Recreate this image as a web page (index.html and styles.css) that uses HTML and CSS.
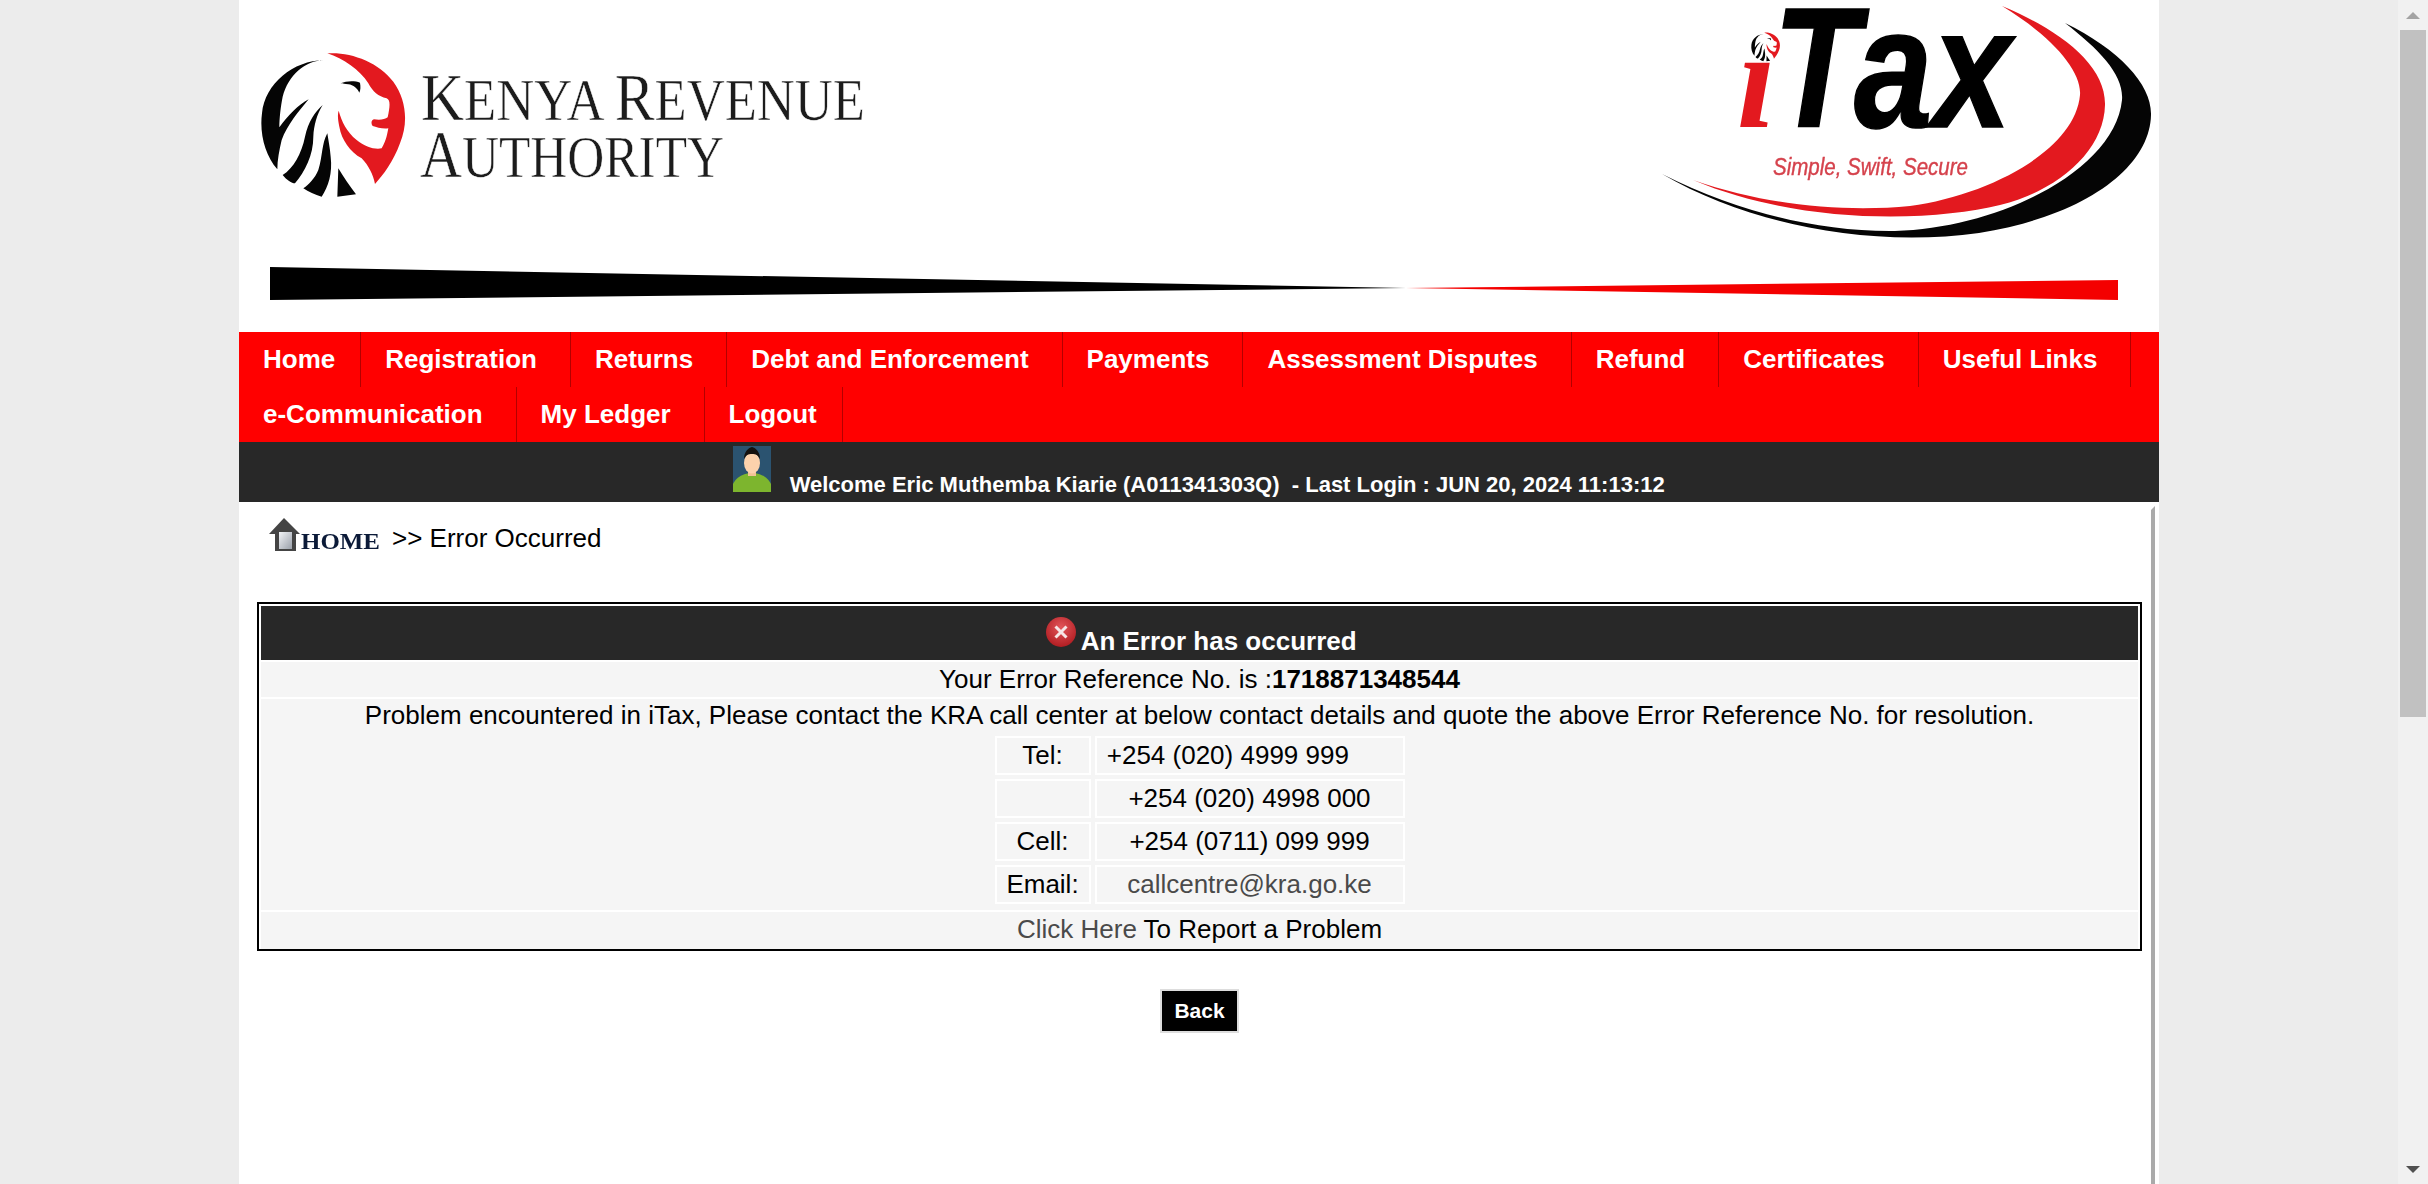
FILE: index.html
```html
<!DOCTYPE html>
<html lang="en">
<head>
    <meta charset="UTF-8">
    <title>iTax - Error Occurred</title>
    <link rel="stylesheet" href="styles.css">
</head>
<body>
    <div class="viewport">
        <div class="wrapper">
            <header class="banner">
                <div class="logos">
                    <svg class="logo-kra" viewBox="239 0 640 210">
                        <defs>
                            <g id="lion">
                                <path fill="#050505" d="M222 60C165 62 115 105 98 170C92 200 88 235 88 262C115 225 145 195 176 178C145 215 112 255 95 300C88 330 82 360 82 388C45 345 28 280 36 220C45 130 130 62 222 60Z"/>
                                <path fill="#050505" d="M218 195C195 215 175 245 165 290C155 340 130 385 98 405C110 420 125 430 135 430C165 395 190 345 190 290C192 255 200 225 218 195Z"/>
                                <path fill="#050505" d="M232 280C215 310 218 350 205 390C195 415 175 435 160 445C175 455 195 465 215 470C235 440 248 400 242 350C240 325 235 300 232 280Z"/>
                                <path fill="#050505" d="M265 385L262 470L318 463C300 440 280 410 265 385Z"/>
                                <path fill="#050505" d="M272 130C290 122 315 122 330 128C332 140 332 150 328 158C322 145 310 135 295 133C285 132 278 132 272 130Z"/>
                                <path fill="#e3191f" d="M232 40C300 35 385 65 430 125C470 180 475 250 450 310C430 365 400 405 375 432C370 405 355 375 335 355C300 335 275 300 268 260C264 240 262 225 266 212C275 245 290 275 320 300C345 320 375 330 395 325C410 300 412 280 415 265C400 268 380 262 368 258C362 250 364 240 372 238C385 240 405 240 413 232C420 200 422 180 410 175C385 170 368 155 355 130C330 90 280 55 232 40Z"/>
                            </g>
                        </defs>
                        <use href="#lion" transform="translate(250 40) scale(.3333)"/>
                        <text class="kra-name" x="421" y="120" textLength="444" lengthAdjust="spacingAndGlyphs">K<tspan class="kra-small">ENYA </tspan>R<tspan class="kra-small">EVENUE</tspan></text>
                        <text class="kra-name" x="420" y="177" textLength="304" lengthAdjust="spacingAndGlyphs">A<tspan class="kra-small">UTHORITY</tspan></text>
                    </svg>
                    <svg class="logo-itax" viewBox="1650 0 509 250">
                        <path fill="#050505" d="M2065 23C2120 50 2152 85 2151 115C2150 165 2090 215 1979 233C1870 248 1750 225 1662 174C1740 213 1820 232 1895 231C2000 228 2115 170 2122 100C2124 75 2100 50 2065 23Z"/>
                        <path fill="#e3191f" d="M2002 6C2060 30 2106 65 2105 105C2104 150 2060 190 2000 205C1930 222 1800 225 1693 180C1770 207 1850 212 1910 206C1990 195 2075 150 2080 95C2082 70 2050 35 2002 6Z"/>
                        <use href="#lion" transform="translate(1749 30) scale(.0665)"/>
                        <text class="itax-i" x="1737" y="127">&#305;</text>
                        <text class="itax-word" x="1773" y="127" textLength="238" lengthAdjust="spacingAndGlyphs">Tax</text>
                        <text class="itax-motto" x="1773" y="175" textLength="195" lengthAdjust="spacingAndGlyphs">Simple, Swift, Secure</text>
                    </svg>
                </div>
                <svg class="swoosh" viewBox="239 260 1920 50">
                    <polygon fill="#000" points="270,267 1406,288 270,300"/>
                    <polygon fill="#f40000" points="1406,288 2118,280 2118,300"/>
                </svg>
            </header>

            <nav class="menu">
                <a class="menu-item" href="#">Home</a>
                <a class="menu-item has-sub" href="#">Registration</a>
                <a class="menu-item has-sub" href="#">Returns</a>
                <a class="menu-item has-sub" href="#">Debt and Enforcement</a>
                <a class="menu-item has-sub" href="#">Payments</a>
                <a class="menu-item has-sub" href="#">Assessment Disputes</a>
                <a class="menu-item has-sub" href="#">Refund</a>
                <a class="menu-item has-sub" href="#">Certificates</a>
                <a class="menu-item has-sub" href="#">Useful Links</a>
                <a class="menu-item has-sub" href="#">e-Communication</a>
                <a class="menu-item has-sub" href="#">My Ledger</a>
                <a class="menu-item" href="#">Logout</a>
            </nav>

            <div class="welcome">
                <svg class="avatar" viewBox="0 0 38 46">
                    <rect width="38" height="46" fill="#2b5370"/>
                    <ellipse cx="19" cy="43" rx="20" ry="16" fill="#7db52e"/>
                    <rect x="15" y="24" width="8" height="6" fill="#f3c296"/>
                    <ellipse cx="19" cy="17" rx="8" ry="10.5" fill="#fcd2ac"/>
                    <path fill="#15120f" d="M11 13C11 6 15 2 19 1C23 2 27 6 27 13C25 9 23 8 19 8C15 8 13 9 11 13Z"/>
                </svg>
                <span class="welcome-text">&nbsp; Welcome Eric Muthemba Kiarie (A011341303Q)&nbsp; - Last Login : JUN 20, 2024 11:13:12</span>
            </div>

            <main class="content">
                <div class="crumbs">
                    <a class="crumb-home" href="#">
                        <svg class="home-icon" viewBox="0 0 112 34">
                            <defs>
                                <linearGradient id="homeBody" x1="0" y1="0" x2="1" y2="1">
                                    <stop offset="0" stop-color="#f2f4f7"/>
                                    <stop offset="1" stop-color="#9aa0aa"/>
                                </linearGradient>
                            </defs>
                            <path fill="#444444" d="M15 0L31 16H27V33H6V16H0Z"/>
                            <rect x="10" y="14" width="13" height="17" fill="url(#homeBody)"/>
                            <text class="home-word" x="32" y="31" textLength="79" lengthAdjust="spacingAndGlyphs">HOME</text>
                        </svg>
                    </a>
                    <span class="crumb-text">&gt;&gt; Error Occurred</span>
                </div>

                <section class="error-box">
                    <h2 class="error-title">
                        <svg class="error-icon" viewBox="0 0 30 30">
                            <defs>
                                <radialGradient id="errorFill" cx=".5" cy=".35" r=".65">
                                    <stop offset="0" stop-color="#e2565a"/>
                                    <stop offset="1" stop-color="#b11d22"/>
                                </radialGradient>
                            </defs>
                            <circle cx="15" cy="15" r="15" fill="url(#errorFill)"/>
                            <path d="M9.5 9.5L20.5 20.5M20.5 9.5L9.5 20.5" stroke="#f6e6e6" stroke-width="3"/>
                        </svg>
                        An Error has occurred
                    </h2>
                    <div class="error-row ref-row">Your Error Reference No. is :<b>1718871348544</b></div>
                    <div class="error-row contact-row">
                        <div class="contact-intro">Problem encountered in iTax, Please contact the KRA call center at below contact details and quote the above Error Reference No. for resolution.</div>
                        <table class="contact-table">
                            <tr><td class="contact-label">Tel:</td><td>+254 (020) 4999 999&nbsp;&nbsp;&nbsp;&nbsp;&nbsp;&nbsp;</td></tr>
                            <tr><td class="contact-label"></td><td>+254 (020) 4998 000</td></tr>
                            <tr><td class="contact-label">Cell:</td><td>+254 (0711) 099 999</td></tr>
                            <tr><td class="contact-label">Email:</td><td><a href="#">callcentre@kra.go.ke</a></td></tr>
                        </table>
                    </div>
                    <div class="error-row report-row"><a href="#">Click Here</a> To Report a Problem</div>
                </section>

                <div class="actions">
                    <button class="back-btn" type="button">Back</button>
                </div>
            </main>
        </div>
    </div>

    <div class="scrollbar">
        <div class="scroll-btn"><span class="arrow-up"></span></div>
        <div class="scroll-thumb"></div>
        <div class="scroll-rest"></div>
        <div class="scroll-btn"><span class="arrow-down"></span></div>
    </div>
</body>
</html>
```

FILE: styles.css
```css
html, body {
    height: 100%;
}
body {
    margin: 0;
    display: flex;
    overflow: hidden;
    background-color: #ececec;
    font-family: "Liberation Sans", Arial, sans-serif;
    font-size: 26px;
    color: #000000;
}
a {
    color: inherit;
    text-decoration: none;
}
svg {
    display: block;
}

.viewport {
    flex: 1;
    min-width: 0;
    height: 100%;
    overflow: hidden;
}
.wrapper {
    width: 1920px;
    height: 100%;
    margin: 0 auto;
    background: #ffffff;
}

/* banner */
.banner {
    height: 332px;
}
.logos {
    display: flex;
    justify-content: space-between;
    height: 260px;
}
.logo-kra {
    width: 640px;
    height: 210px;
    filter: blur(0.5px);
}
.logo-itax {
    width: 509px;
    height: 250px;
    filter: blur(0.6px);
}
.swoosh {
    width: 1920px;
    height: 50px;
}
.kra-name {
    font-family: "Liberation Serif", serif;
    font-size: 68px;
    fill: #1c1c1c;
    stroke: #ffffff;
    stroke-width: 0.5px;
}
.kra-small {
    font-size: 60px;
}
.itax-i {
    font-family: "Liberation Serif", serif;
    font-style: italic;
    font-weight: bold;
    font-size: 139px;
    fill: #e3191f;
}
.itax-word {
    font-weight: bold;
    font-style: italic;
    font-size: 170px;
    fill: #000000;
    stroke: #000000;
    stroke-width: 1.5px;
}
.itax-motto {
    font-style: italic;
    font-size: 24px;
    fill: #d5424c;
    stroke: #d5424c;
    stroke-width: 0.4px;
}

/* menu */
.menu {
    display: flex;
    flex-wrap: wrap;
    background: #ff0000;
}
.menu-item {
    padding: 0 25px 0 24px;
    line-height: 55px;
    font-weight: bold;
    color: #ffffff;
    border-right: 1px solid #b30000;
}
.has-sub {
    padding-right: 33px;
}

.welcome {
    box-sizing: border-box;
    height: 60px;
    padding-top: 4px;
    background: #282828;
    color: #ffffff;
    text-align: center;
    font-size: 22px;
    font-weight: bold;
}
.avatar {
    display: inline-block;
    width: 38px;
    height: 46px;
    filter: blur(0.6px);
}

/* main area */
.content {
    box-sizing: border-box;
    width: 1916px;
    height: 678px;
    margin-top: 4px;
    border-top: 4px solid #ffffff;
    border-right: 4px solid #aaaaaa;
    padding-left: 18px;
}
.crumbs {
    display: flex;
    gap: 11px;
    height: 41px;
    padding-left: 12px;
}
.crumb-home {
    margin-top: 8px;
}
.crumb-text {
    margin-top: 13px;
    line-height: 30px;
}
.home-icon {
    width: 112px;
    height: 34px;
    filter: blur(0.6px);
}
.home-word {
    font-family: "Liberation Serif", serif;
    font-weight: bold;
    font-size: 24px;
    fill: #0b1a38;
}

.error-box {
    box-sizing: border-box;
    width: 1885px;
    margin-top: 51px;
    padding: 2px 2px 0;
    border: 2px solid #000000;
    text-align: center;
}
.error-title {
    box-sizing: border-box;
    height: 54px;
    margin: 0 0 2px;
    padding-top: 11px;
    background: #282828;
    color: #ffffff;
    font-size: 26px;
    line-height: 1;
}
.error-icon {
    display: inline-block;
    width: 30px;
    height: 30px;
    vertical-align: 3px;
    margin: 0 -2px 0 4px;
}
.error-row {
    margin-bottom: 2px;
    background: #f5f5f5;
}
.error-row a {
    color: #4a4a4a;
}
.ref-row {
    line-height: 35px;
}
.contact-intro {
    line-height: 33px;
}
.contact-row {
    padding-bottom: 2px;
}
.report-row {
    height: 37px;
    margin-bottom: 0;
    line-height: 35px;
}
.contact-table {
    margin: 0 auto;
    border-spacing: 4px;
    font-size: 26px;
}
.contact-table td {
    width: 306px;
    height: 35px;
    padding: 0;
    border: 2px solid #ffffff;
    line-height: 35px;
    text-align: center;
}
.contact-table .contact-label {
    width: 92px;
}

.actions {
    display: flex;
    justify-content: center;
    width: 1885px;
    margin-top: 38px;
}
.back-btn {
    box-sizing: border-box;
    width: 79px;
    height: 44px;
    padding: 0;
    border: 2px solid #dddddd;
    background: #000000;
    color: #ffffff;
    font-family: "Liberation Sans", Arial, sans-serif;
    font-size: 21px;
    font-weight: bold;
}

/* page scrollbar */
.scrollbar {
    display: flex;
    flex-direction: column;
    flex: none;
    width: 30px;
    height: 100%;
    background: #f1f1f1;
}
.scroll-btn {
    display: flex;
    align-items: center;
    justify-content: center;
    height: 30px;
}
.scroll-thumb {
    height: 687px;
    margin: 0 2px;
    background: #c1c1c1;
}
.scroll-rest {
    flex: 1;
}
.arrow-up {
    border-left: 7px solid transparent;
    border-right: 7px solid transparent;
    border-bottom: 7px solid #a3a3a3;
}
.arrow-down {
    border-left: 7px solid transparent;
    border-right: 7px solid transparent;
    border-top: 7px solid #505050;
}
```
